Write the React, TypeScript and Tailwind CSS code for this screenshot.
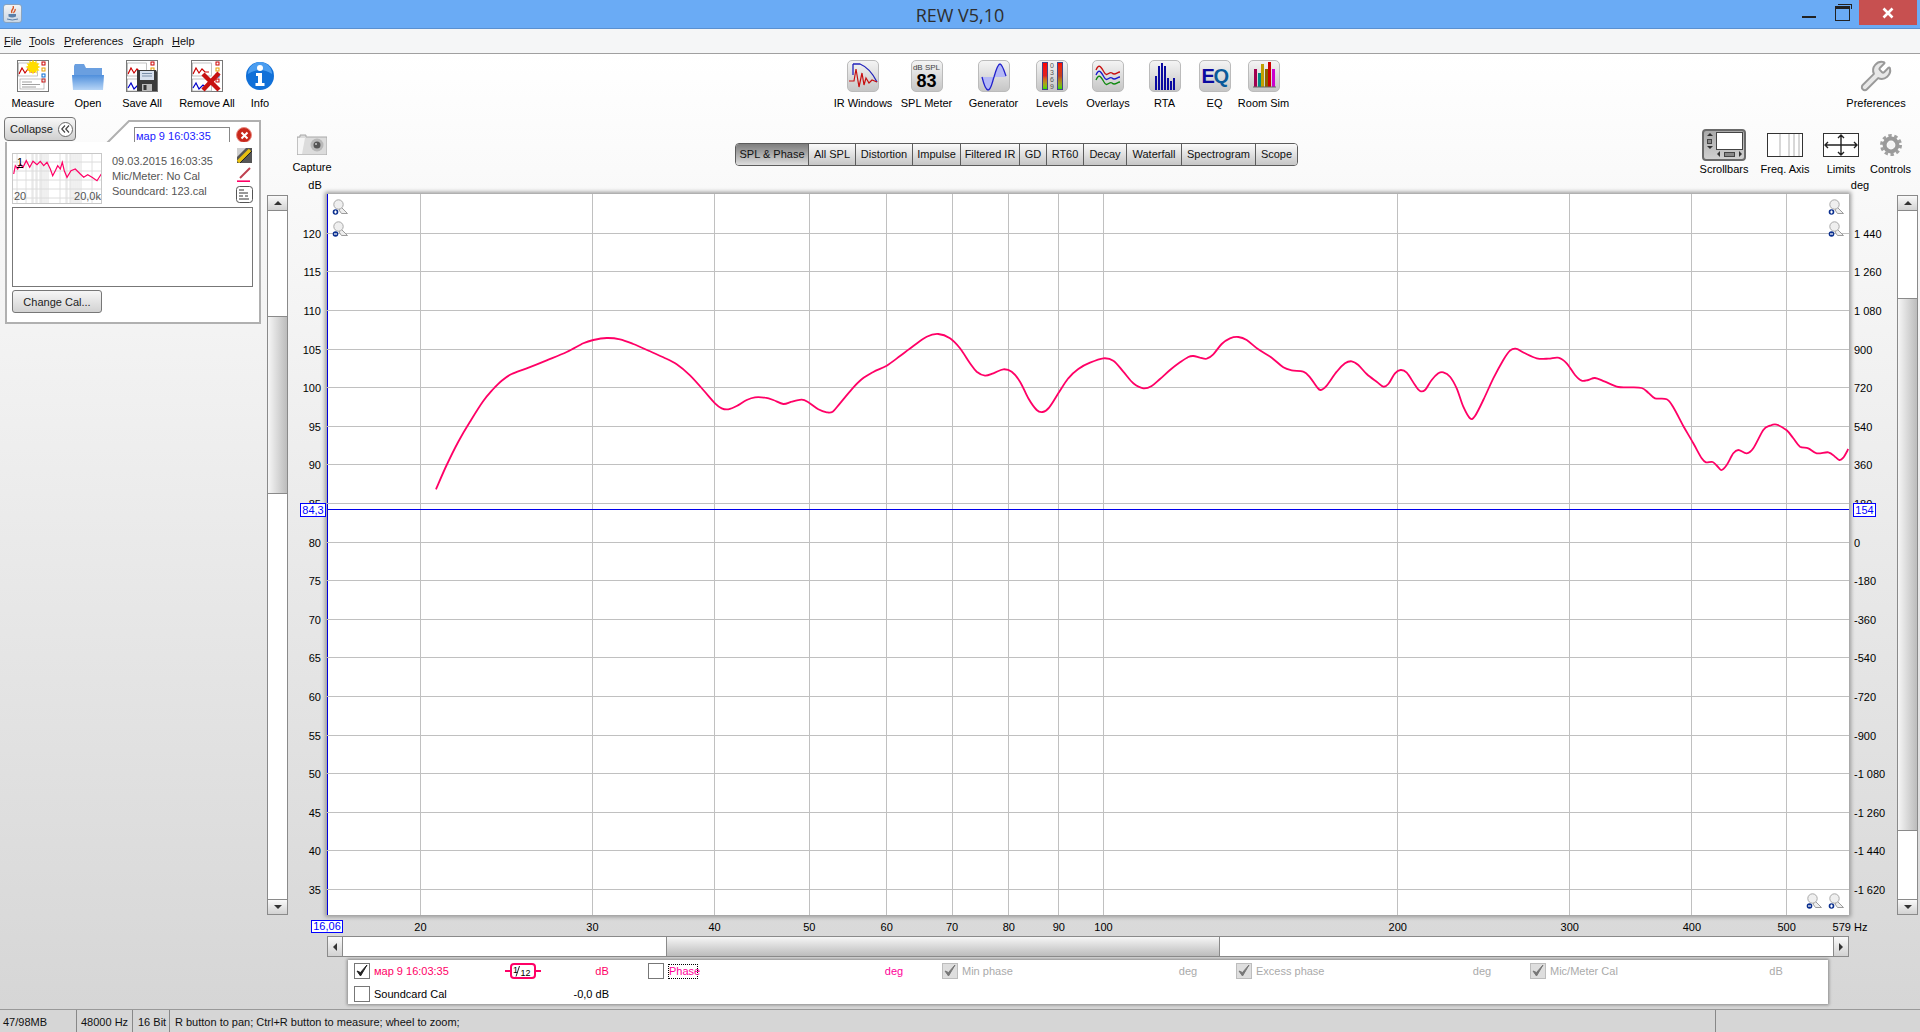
import React from "react";
import { Wrench } from "lucide-react";

const PLOT_X = 327, PLOT_Y = 194, PLOT_W = 1522, PLOT_H = 721;
const fx = (f: number) => 420.4 + 977.3 * Math.log10(f / 20) - PLOT_X;
const dby = (db: number) => 233.3 + (120 - db) * 7.72 - PLOT_Y;

const z9 = [[18,508],[50,435],[85,365],[120,305],[160,243],[190,207],[215,182],[245,162],[290,145],[350,121],[410,96],[460,70],[490,60],[530,54],[570,58],[610,72],[660,94],[700,112],[740,133],[780,166],[820,210],[855,250],[875,265],[895,268],[920,258],[950,240],[975,232],[1005,233],[1030,240],[1060,252],[1085,245],[1115,239],[1135,247],[1165,268],[1190,277],[1208,275],[1230,250],[1265,208],[1295,178],[1330,156],[1370,137],[1410,108],[1450,78],[1490,50]];
const z10 = [[25,42],[60,55],[90,85],[120,130],[140,155],[165,167],[190,160],[220,148],[245,155],[270,185],[295,235],[320,270],[338,276],[358,262],[385,220],[415,175],[445,147],[480,128],[520,115],[550,122],[580,155],[610,190],[640,205],[665,198],[690,177],[720,150],[750,127],[775,111],[790,108],[810,113],[830,116],[850,103],[875,72],[900,55],[925,51],[950,60],[985,88],[1025,113],[1060,142],[1085,151],[1120,155],[1140,172],[1160,200],[1172,210],[1190,197],[1220,155],[1245,130],[1265,124],[1285,135],[1310,162],[1340,185],[1360,200],[1375,192],[1395,160],[1412,150],[1430,158],[1455,195]];
const z11 = [[0,183],[15,180],[35,150],[55,130],[70,127],[90,140],[110,175],[130,230],[150,265],[165,258],[190,210],[220,145],[250,90],[270,62],[288,56],[315,70],[350,85],[385,86],[415,83],[440,100],[465,135],[485,152],[505,150],[525,144],[555,155],[595,171],[630,172],[665,174],[685,188],[705,205],[740,208],[760,232],[790,288],[820,340],[845,385],[858,397],[878,396],[895,412],[905,420],[920,405],[940,370],[955,360],[980,370],[1000,355],[1030,300],[1050,287],[1070,284],[1100,301],[1120,325],[1140,350],[1165,355],[1190,370],[1225,367],[1245,380],[1258,390],[1270,383],[1285,357]];
const pts: number[][] = [
  ...z9.map(([x, y]) => [430 + x / 3, 320 + y / 3]),
  ...z10.map(([x, y]) => [930 + x / 3, 320 + y / 3]),
  ...z11.map(([x, y]) => [1420 + x / 3, 330 + y / 3]),
].map(([x, y]) => [x - PLOT_X, y - PLOT_Y]);

function smooth(p: number[][]) {
  let d = `M${p[0][0].toFixed(1)} ${p[0][1].toFixed(1)}`;
  for (let i = 0; i < p.length - 1; i++) {
    const a = p[Math.max(i - 1, 0)], b = p[i], c = p[i + 1], e = p[Math.min(i + 2, p.length - 1)];
    d += `C${(b[0] + (c[0] - a[0]) / 6).toFixed(1)} ${(b[1] + (c[1] - a[1]) / 6).toFixed(1)} ${(c[0] - (e[0] - b[0]) / 6).toFixed(1)} ${(c[1] - (e[1] - b[1]) / 6).toFixed(1)} ${c[0].toFixed(1)} ${c[1].toFixed(1)}`;
  }
  return d;
}

const freqs = [20, 30, 40, 50, 60, 70, 80, 90, 100, 200, 300, 400, 500];
const dbs = Array.from({ length: 18 }, (_, i) => 120 - i * 5);
const degs = ["1 440", "1 260", "1 080", "900", "720", "540", "360", "180", "0", "-180", "-360", "-540", "-720", "-900", "-1 080", "-1 260", "-1 440", "-1 620"];
const tabs: [string, number][] = [["SPL & Phase", 72], ["All SPL", 47], ["Distortion", 57], ["Impulse", 48], ["Filtered IR", 59], ["GD", 27], ["RT60", 37], ["Decay", 43], ["Waterfall", 55], ["Spectrogram", 74], ["Scope", 42]];
const menus: [string, number][] = [["File", 25], ["Tools", 35], ["Preferences", 69], ["Graph", 39], ["Help", 30]];

function Report({ double }: { double?: boolean }) {
  return (
    <g>
      <rect x="0.5" y="0.5" width="31" height="31" fill="#fff" stroke="#777" />
      <path d="M2 14 L5 8 L8 13 L11 9 L14 12 L18 12" stroke="#c00" strokeWidth="1.2" fill="none" />
      <rect x="1.5" y="3" width="19" height="13" fill="none" stroke="#999" strokeWidth=".6" />
      {[[25, 2, "#c00"], [25, 8, "#e8a000"], [25, 14, "#0a6ad0"], [25, 19, "#c00"]].map(([x, y, c], i) => (
        <rect key={i} x={x as number} y={y as number} width="3" height="3" fill="#fff" stroke={c as string} />
      ))}
      {double ? (
        <>
          <rect x="1.5" y="19" width="19" height="12" fill="#fff" stroke="#999" strokeWidth=".6" />
          <path d="M2 28 L5 23 L8 29 L12 25 L16 28" stroke="#00c" strokeWidth="1.2" fill="none" />
        </>
      ) : (
        <>
          <rect x="3" y="19" width="24" height="10" fill="none" stroke="#999" strokeWidth=".6" />
          <path d="M5 22h10M5 24.5h18M5 27h14" stroke="#777" strokeWidth=".7" />
        </>
      )}
    </g>
  );
}

const S32 = ({ children, w = 32, h = 32 }: { children: React.ReactNode; w?: number; h?: number }) => (
  <svg width={w} height={h} viewBox={`0 0 ${w} ${h}`}>{children}</svg>
);

const MeasureIcon = () => (
  <S32>
    <Report />
    <g transform="translate(16 7)">
      {Array.from({ length: 12 }, (_, i) => (
        <path key={i} d="M0 -7.5 L2 -3 L-2 -3Z" fill="#ffdd00" transform={`rotate(${i * 30})`} />
      ))}
      <circle r="5" fill="#ffdd00" />
    </g>
  </S32>
);
const OpenIcon = () => (
  <S32>
    <defs>
      <linearGradient id="fo" x1="0" y1="0" x2="0" y2="1"><stop offset="0" stopColor="#4f8fdc" /><stop offset="1" stopColor="#b7d5f6" /></linearGradient>
    </defs>
    <path d="M2 6 L3 4 L12 4 L14 8 L30 8 L30 16 L2 16Z" fill="#6a9fe0" />
    <path d="M0 15 L32 15 L31 30 L1 30Z" fill="url(#fo)" />
  </S32>
);
const SaveIcon = () => (
  <S32>
    <Report double />
    <path d="M11 10 H30 L31 12 V31 H11Z" fill="#3a3a3a" />
    <rect x="14" y="11" width="14" height="9" fill="#d8e0ee" />
    <path d="M16 13.5h10M16 16h10" stroke="#7a8ea8" />
    <rect x="16" y="24" width="10" height="7" fill="#bbb" />
    <rect x="17.5" y="25" width="3" height="5" fill="#333" />
  </S32>
);
const RemoveIcon = () => (
  <S32>
    <Report double />
    <path d="M12 14 L28 30 M28 13 L12 30" stroke="#c81010" strokeWidth="4.4" />
  </S32>
);
const InfoIcon = () => (
  <S32 w={28} h={32}>
    <circle cx="14" cy="16" r="14" fill="#1170d8" />
    <path d="M2 14 A12 12 0 0 1 26 14 Q14 6 2 14Z" fill="#4a9df0" />
    <circle cx="14" cy="8" r="3" fill="#fff" />
    <path d="M10 13h6v10h2.5v3h-9v-3h2.5v-7h-2z" fill="#fff" />
  </S32>
);

function IconBox({ children }: { children: React.ReactNode }) {
  return (
    <div className="w-[32px] h-[32px] rounded-[5px] border border-[#bbbbbb] bg-gradient-to-b from-[#f4f4f4] to-[#c6c6c6] flex items-center justify-center overflow-hidden">
      {children}
    </div>
  );
}

const IrIcon = () => (
  <S32 w={30} h={30}>
    <path d="M5 3 V14 M5 3 H12 Q22 7 29 21" stroke="#2222bb" strokeWidth="1.3" fill="none" />
    <path d="M1 20 H6 L8 8 L11 26 L14 12 L16 24 L18 17 L21 22 L24 19 L29 21" stroke="#c81010" strokeWidth="1.2" fill="none" />
  </S32>
);
const GenIcon = () => (
  <S32 w={30} h={30}>
    <path d="M3 16 C5 24 7 29 9 29 C12 29 13 22 15 16 C17 9 19 3 21 3 C23 3 25 9 27 16Z" fill="#b4b8f6" />
    <path d="M3 16 C5 24 7 29 9 29 C12 29 13 22 15 16 C17 9 19 3 21 3 C23 3 25 9 27 15" stroke="#2222cc" strokeWidth="1.3" fill="none" />
  </S32>
);
const OverlayIcon = () => (
  <S32 w={30} h={30}>
    {[["#c81010", 0], ["#1818cc", 5], ["#108a10", 10]].map(([c, d]) => (
      <path key={c as string} d="M3 9 C6 2 8 6 11 11 C14 17 16 10 19 12 C22 15 24 11 27 11" stroke={c as string} strokeWidth="1.3" fill="none" transform={`translate(0 ${d})`} />
    ))}
  </S32>
);
const RtaIcon = () => (
  <S32 w={30} h={30}>
    {[[5, 14], [8, 24], [11, 27], [14, 24], [17, 12], [20, 9], [23, 12]].map(([x, h]) => (
      <rect key={x} x={x} y={29 - h} width="2" height={h} fill="#0a0aa0" />
    ))}
  </S32>
);
const RoomIcon = () => (
  <S32 w={30} h={30}>
    {[[5, 18, "#a00050"], [9, 14, "#008888"], [12, 23, "#c0a000"], [16, 18, "#8a6000"], [19, 25, "#cc0000"], [23, 18, "#cc00cc"]].map(([x, h, c], i) => (
      <rect key={i} x={x as number} y={26 - (h as number)} width="3" height={h as number} fill={c as string} />
    ))}
    <path d="M4 26H27" stroke="#666" />
  </S32>
);

function Tool({ w, icon, label, boxH = 32 }: { w: number; icon: React.ReactNode; label: string; boxH?: number }) {
  return (
    <div className="flex flex-col items-center shrink-0" style={{ width: w }}>
      <div className="flex items-center justify-center" style={{ height: boxH }}>{icon}</div>
      <div className="h-[13px] mt-[5px] leading-[13px] whitespace-nowrap text-black">{label}</div>
    </div>
  );
}

function Magnifier({ plus }: { plus?: boolean }) {
  return (
    <svg width="16" height="16" viewBox="0 0 16 16" className="block">
      <path d="M9 8 L15.5 14.5 H9.5 L7 11Z" fill="#eeeeee" stroke="#9c9c9c" strokeWidth="1" />
      <circle cx="6.5" cy="5.5" r="4.7" fill="#efefef" stroke="#a8a8a8" />
      <circle cx="3.5" cy="13" r="2.8" fill="#0a2f8f" />
      <path d={plus ? "M2 13h3M3.5 11.5v3" : "M2 13h3"} stroke="#fff" strokeWidth="1.2" />
    </svg>
  );
}

function Tick({ dim }: { dim?: boolean }) {
  return (
    <svg width="14" height="14" viewBox="0 0 14 14">
      <path d="M2 7 L5.5 12 L12 1 L5.5 8.5Z" fill={dim ? "#777" : "#222"} stroke={dim ? "#777" : "#222"} strokeWidth="1" strokeLinejoin="round" />
    </svg>
  );
}

function Check({ checked, dim }: { checked?: boolean; dim?: boolean }) {
  return (
    <div className={`w-[16px] h-[16px] shrink-0 border flex items-center justify-center ${dim ? "bg-[#dedede] border-[#bdbdbd]" : "bg-white border-[#777777]"}`}>
      {checked && <Tick dim={dim} />}
    </div>
  );
}

function DimSeries({ label, unit }: { label: string; unit: string }) {
  return (
    <div className="flex items-center ml-[33px] shrink-0 text-[#aaaaaa]">
      <Check checked dim />
      <div className="ml-[4px] w-[211px]">{label}</div>
      <div className="w-[30px] text-center">{unit}</div>
    </div>
  );
}

function VScroll({ thumbTop, thumbH }: { thumbTop: number; thumbH: number }) {
  return (
    <div className="w-[21px] h-[720px] mt-px shrink-0 border border-[#8a8a8a] bg-white flex flex-col">
      <div className="h-[15px] shrink-0 bg-gradient-to-b from-[#fafafa] to-[#d2d2d2] border-b border-[#8a8a8a] flex items-center justify-center">
        <div className="w-0 h-0 border-x-[4px] border-x-transparent border-b-[4px] border-b-[#333333]" />
      </div>
      <div className="flex-1">
        <div className="w-full bg-gradient-to-r from-[#f6f6f6] to-[#bcbcbc] border-y border-[#8a8a8a]" style={{ marginTop: thumbTop, height: thumbH }} />
      </div>
      <div className="h-[15px] shrink-0 bg-gradient-to-b from-[#fafafa] to-[#d2d2d2] border-t border-[#8a8a8a] flex items-center justify-center">
        <div className="w-0 h-0 border-x-[4px] border-x-transparent border-t-[4px] border-t-[#333333]" />
      </div>
    </div>
  );
}

const thumbCurve = [[40,520],[45,495],[52,505],[60,490],[68,500],[78,480],[88,500],[98,482],[110,492],[120,482],[130,495],[140,485],[150,505],[157,525],[165,510],[172,495],[180,505],[186,485],[192,510],[200,530],[212,510],[225,505],[240,520],[250,530],[262,522],[275,530],[290,540],[303,520]]
  .map(([x, y]) => `${((x - 38) / 3).toFixed(1)},${((y - 460) / 3).toFixed(1)}`).join(" ");

function Thumb() {
  return (
    <div className="relative w-[90px] h-[51px] mt-[5px] border border-[#c8c8c8] bg-white shrink-0 overflow-hidden">
      <svg width="90" height="51" className="block">
        {[4, 13, 19, 20, 23, 24, 27, 28, 29, 31, 33, 35, 47, 53, 54, 57, 58, 60, 62, 64, 66, 68, 79].map((x) => (
          <path key={x} d={`M${x} 0V51`} stroke="#e0e0e0" strokeWidth="1" />
        ))}
        {[8, 17, 26, 35, 44].map((y) => (
          <path key={y} d={`M0 ${y}H90`} stroke="#dcdcdc" strokeWidth="1" />
        ))}
        <polyline points={thumbCurve} fill="none" stroke="#ff0066" strokeWidth="1.2" />
      </svg>
      <div className="absolute left-[4px] top-[2px] leading-[13px] underline text-black">1</div>
      <div className="absolute left-[1px] bottom-0 leading-[13px] text-[#555555]">20</div>
      <div className="absolute right-0 bottom-0 leading-[13px] text-[#555555]">20,0k</div>
    </div>
  );
}

export default function App() {
  return (
    <div className="w-[1920px] h-[1032px] overflow-hidden flex flex-col font-['Liberation_Sans',Arial,sans-serif] text-[11px] text-black select-none">
      {/* Title bar */}
      <div className="h-[29px] shrink-0 bg-[#6aabf5] border-b border-[#5a90d0] flex items-start relative">
        <div className="ml-[3px] mt-[4px] w-[19px] h-[19px] rounded-[3px] bg-gradient-to-b from-[#f4f4f4] to-[#c9d6e4] border border-[#8aa4c0] flex items-center justify-center">
          <svg width="13" height="15" viewBox="0 0 13 15">
            <path d="M7 0 C9 3 4 4 6 7 M9 3 C10 5 7 6 8 7" stroke="#d8501c" strokeWidth="1.3" fill="none" />
            <path d="M2.5 8 H10 V10.5 Q6 12.5 2.5 10.5Z" fill="#5a7fa8" />
            <path d="M1 13 Q6 15 12 13" stroke="#5a7fa8" fill="none" strokeWidth="1" />
          </svg>
        </div>
        <div className="absolute left-1/2 -translate-x-1/2 top-[4px] text-[18px] leading-[22px] text-[#2e2e2e] font-['Open_Sans',sans-serif] whitespace-nowrap">REW V5,10</div>
        <div className="ml-auto flex items-start">
          <div className="w-[14px] h-[2px] bg-[#222222] mt-[16px]" />
          <div className="relative w-[15px] h-[15px] ml-[19px] mt-[6px] border-[1.5px] border-t-[3px] border-[#222222]">
            <div className="absolute -top-[5px] left-[2px] w-[14px] h-[5px] border-t-[1.5px] border-r-[1.5px] border-[#222222]" />
          </div>
          <div className="w-[58px] h-[25px] ml-[9px] mr-[3px] bg-[#c75050] flex items-center justify-center">
            <svg width="12" height="12" viewBox="0 0 12 12"><path d="M1.5 1.5 L10.5 10.5 M10.5 1.5 L1.5 10.5" stroke="#fff" strokeWidth="2.6" /></svg>
          </div>
        </div>
      </div>

      {/* Menu bar */}
      <div className="h-[25px] shrink-0 bg-[#f5f6f7] border-b border-[#a0a0a0] flex items-center pl-[4px] text-[#111111]">
        {menus.map(([m, w]) => (
          <span key={m} className="whitespace-nowrap" style={{ width: w }}><span className="underline">{m[0]}</span>{m.slice(1)}</span>
        ))}
      </div>

      {/* Body */}
      <div className="h-[955px] shrink-0 bg-gradient-to-b from-[#ffffff] to-[#d6d6d6] flex flex-col">
        {/* Main toolbar */}
        <div className="h-[63px] shrink-0 flex pt-[6px] pl-[6px]">
          <Tool w={54} icon={<MeasureIcon />} label="Measure" />
          <Tool w={56} icon={<OpenIcon />} label="Open" />
          <Tool w={52} icon={<SaveIcon />} label="Save All" />
          <Tool w={78} icon={<RemoveIcon />} label="Remove All" />
          <Tool w={28} icon={<InfoIcon />} label="Info" />
          <div className="w-[566px] shrink-0" />
          <Tool w={46} icon={<IconBox><IrIcon /></IconBox>} label="IR Windows" />
          <Tool w={81} label="SPL Meter" icon={
            <IconBox>
              <div className="flex flex-col items-center leading-none">
                <span className="text-[8px] text-[#444444] leading-[9px]">dB SPL</span>
                <span className="text-[18px] font-bold leading-[18px] text-black">83</span>
              </div>
            </IconBox>} />
          <Tool w={53} icon={<IconBox><GenIcon /></IconBox>} label="Generator" />
          <Tool w={64} label="Levels" icon={
            <IconBox>
              <div className="flex gap-[1px] h-[28px]">
                <div className="w-[6px] border border-[#444488] bg-gradient-to-b from-[#ff0000] via-[#e02020] to-[#00dd00]" />
                <div className="w-[7px] flex flex-col items-center justify-between text-[7px] leading-[7px] text-[#555555]"><span>0</span><span>3</span><span>6</span><span>9</span></div>
                <div className="w-[6px] border border-[#444488] bg-gradient-to-b from-[#ff0000] via-[#c04020] to-[#00dd00]" />
              </div>
            </IconBox>} />
          <Tool w={48} icon={<IconBox><OverlayIcon /></IconBox>} label="Overlays" />
          <Tool w={65} icon={<IconBox><RtaIcon /></IconBox>} label="RTA" />
          <Tool w={35} label="EQ" icon={
            <IconBox>
              <span className="text-[20px] font-bold leading-none tracking-[-1.5px] text-[#0a0aa0]">E<span className="text-[#0a5a9a]">Q</span></span>
            </IconBox>} />
          <Tool w={63} icon={<IconBox><RoomIcon /></IconBox>} label="Room Sim" />
          <div className="w-[551px] shrink-0" />
          <Tool w={60} label="Preferences" icon={<Wrench size={34} strokeWidth={1.4} color="#9a9a9a" fill="#e8e8e8" />} />
        </div>

        {/* Working area */}
        <div className="flex-1 flex min-h-0">
          {/* Left panel */}
          <div className="w-[267px] shrink-0 pl-[5px]">
            <div className="relative h-[25px]">
              <svg width="256" height="27" className="absolute left-0 top-0">
                <path d="M1 26 H102 L124 4 H255 V27 H1Z" fill="#ffffff" stroke="#b0b0b0" strokeWidth="2" />
              </svg>
              <div className="relative flex items-start">
                <div className="-ml-px w-[72px] h-[24px] rounded-[4px] border border-[#777777] bg-gradient-to-b from-[#f8f8f8] to-[#d0d0d0] flex items-center pl-[5px] gap-[5px]">
                  <span className="text-[#222222]">Collapse</span>
                  <div className="w-[15px] h-[15px] rounded-full border border-[#666666] bg-white flex items-center justify-center">
                    <svg width="9" height="8" viewBox="0 0 9 8"><path d="M4 0.5 L0.8 4 L4 7.5 M8 0.5 L4.8 4 L8 7.5" stroke="#444" strokeWidth="1.2" fill="none" /></svg>
                  </div>
                </div>
                <div className="ml-[58px] mt-[10px] w-[96px] h-[17px] border border-[#888888] bg-white text-[#1a1aff] leading-[16px] pl-px whitespace-nowrap">мар 9 16:03:35</div>
                <div className="ml-[6px] mt-[10px] w-[16px] h-[16px] rounded-full bg-[#c8281c] border border-[#e88a80] flex items-center justify-center">
                  <svg width="9" height="9" viewBox="0 0 9 9"><path d="M1.5 1.5 L7.5 7.5 M7.5 1.5 L1.5 7.5" stroke="#fff" strokeWidth="2" /></svg>
                </div>
              </div>
            </div>
            <div className="relative w-[256px] h-[182px] bg-white border-2 border-t-0 border-[#b0b0b0] pl-[5px] pt-[6px]">
              <div className="flex h-[56px]">
                <Thumb />
                <div className="ml-[10px] w-[124px] pt-[7px] flex flex-col gap-[2px] text-[#555555] leading-[13px] whitespace-nowrap">
                  <div>09.03.2015 16:03:35</div>
                  <div>Mic/Meter: No Cal</div>
                  <div>Soundcard: 123.cal</div>
                </div>
                <div className="flex flex-col items-center w-[17px] gap-[4px]">
                  <svg width="15" height="15" viewBox="0 0 15 15">
                    <rect width="15" height="15" fill="#555" />
                    <path d="M0 0H9L0 9Z" fill="#cfcfcf" />
                    <path d="M1 14 L13 2" stroke="#e8c010" strokeWidth="3.4" />
                    <path d="M3 15 L15 3" stroke="#222" strokeWidth="1" />
                  </svg>
                  <svg width="15" height="15" viewBox="0 0 15 15">
                    <path d="M3 11 L13 1" stroke="#c04050" strokeWidth="2" />
                    <path d="M0 14.2 H13" stroke="#ff0066" strokeWidth="1.6" />
                  </svg>
                  <svg width="17" height="17" viewBox="0 0 17 17">
                    <rect x=".5" y=".5" width="16" height="16" rx="3" fill="#fff" stroke="#555" />
                    <path d="M3 4h5M3 7h9M3 10h4M9 10h3M3 13h10" stroke="#333" />
                  </svg>
                </div>
              </div>
              <div className="w-[241px] h-[80px] mt-[3px] border border-[#777777] bg-white" />
              <div className="w-[90px] h-[23px] mt-[3px] pt-px rounded-[3px] border border-[#777777] bg-gradient-to-b from-[#f6f6f6] to-[#d2d2d2] flex items-center justify-center text-[#222222]">Change Cal...</div>
            </div>
          </div>

          {/* Graph column */}
          <div className="flex-1 min-w-0 flex flex-col">
            {/* Upper controls */}
            <div className="h-[77px] shrink-0 flex">
              <div className="ml-[23px] w-[44px] shrink-0 flex flex-col items-center pt-[17px]">
                <svg width="30" height="21" viewBox="0 0 30 21">
                  <path d="M0 3 H3 V1 H9 V3 H30 V21 H0Z" fill="#dcdcdc" stroke="#a8a8a8" />
                  <path d="M1 4 H8 L5 20 H1Z" fill="#f6f6f6" />
                  <circle cx="20" cy="11" r="6.5" fill="#b8b8b8" />
                  <circle cx="20" cy="11" r="3.5" fill="#555" />
                  <circle cx="19" cy="10" r="1" fill="#ccc" />
                </svg>
                <div className="mt-[6px] h-[13px] leading-[13px]">Capture</div>
                <div className="mt-[5px] h-[13px] leading-[13px] pl-[6px]">dB</div>
              </div>
              <div className="ml-[401px] mt-[26px] h-[23px] flex border border-[#5c5c5c] rounded-[4px] overflow-hidden shrink-0">
                {tabs.map(([t, w], i) => (
                  <div
                    key={t}
                    style={{ width: w }}
                    className={`flex items-center justify-center whitespace-nowrap text-[#111111] ${i > 0 ? "border-l border-[#5c5c5c]" : ""} ${i === 0 ? "bg-gradient-to-b from-[#7e7e7e] to-[#dedede]" : "bg-gradient-to-b from-[#fbfbfb] to-[#c6c6c6]"}`}
                  >
                    {t}
                  </div>
                ))}
              </div>
              <div className="ml-[396px] pt-[12px] flex flex-col shrink-0">
                <div className="flex">
                  <div className="w-[60px] flex flex-col items-center">
                    <div className="w-[44px] h-[32px] rounded-[4px] border-2 border-[#6a6a6a] bg-gradient-to-b from-[#aaaaaa] to-[#d0d0d0] flex flex-col p-[1px]">
                      <div className="flex-1 flex gap-[2px]">
                        <div className="w-[9px] flex flex-col items-center justify-between py-[1px]">
                          <div className="w-0 h-0 border-x-[3px] border-x-transparent border-b-[3px] border-b-[#333333]" />
                          <div className="w-[5px] h-[5px] bg-[#888888] border border-[#444444]" />
                          <div className="w-0 h-0 border-x-[3px] border-x-transparent border-t-[3px] border-t-[#333333]" />
                        </div>
                        <div className="flex-1 bg-white border border-[#444444]" />
                      </div>
                      <div className="h-[8px] ml-[11px] flex items-center justify-between px-[1px]">
                        <div className="w-0 h-0 border-y-[3px] border-y-transparent border-r-[3px] border-r-[#333333]" />
                        <div className="w-[11px] h-[5px] bg-[#888888] border border-[#444444]" />
                        <div className="w-0 h-0 border-y-[3px] border-y-transparent border-l-[3px] border-l-[#333333]" />
                      </div>
                    </div>
                    <div className="mt-[2px] h-[13px] leading-[13px] whitespace-nowrap">Scrollbars</div>
                  </div>
                  <div className="w-[62px] flex flex-col items-center">
                    <div className="h-[32px] flex items-center">
                      <svg width="36" height="24" viewBox="0 0 36 24">
                        <rect x=".5" y=".5" width="35" height="23" fill="#fff" stroke="#333" />
                        <path d="M13 1V23M22 1V23M27 1V23M32 1V23" stroke="#b0b0b0" />
                      </svg>
                    </div>
                    <div className="mt-[2px] h-[13px] leading-[13px] whitespace-nowrap">Freq. Axis</div>
                  </div>
                  <div className="w-[50px] flex flex-col items-center">
                    <div className="h-[32px] flex items-center">
                      <svg width="36" height="24" viewBox="0 0 36 24">
                        <rect x=".5" y=".5" width="35" height="23" fill="#fff" stroke="#333" />
                        <path d="M2 12H34M18 2V22M5 9L2 12L5 15M31 9L34 12L31 15M15 5L18 2L21 5M15 19L18 22L21 19" stroke="#222" strokeWidth="1.4" fill="none" />
                      </svg>
                    </div>
                    <div className="mt-[2px] h-[13px] leading-[13px] whitespace-nowrap">Limits</div>
                  </div>
                  <div className="w-[49px] flex flex-col items-center">
                    <div className="h-[32px] flex items-center">
                      <svg width="22" height="22" viewBox="0 0 22 22">
                        <circle cx="11" cy="11" r="9.5" fill="none" stroke="#a0a0a0" strokeWidth="3" strokeDasharray="3.4 2.57" />
                        <circle cx="11" cy="11" r="6.4" fill="none" stroke="#9a9a9a" strokeWidth="4" />
                        <circle cx="11" cy="11" r="3.6" fill="#f4f4f4" />
                      </svg>
                    </div>
                    <div className="mt-[2px] h-[13px] leading-[13px] whitespace-nowrap">Controls</div>
                  </div>
                </div>
                <div className="ml-[146px] mt-[3px] w-[40px] text-center h-[13px] leading-[13px]">deg</div>
              </div>
            </div>

            {/* Plot row */}
            <div className="h-[721px] shrink-0 flex">
              <VScroll thumbTop={105} thumbH={178} />
              <div className="relative w-[39px] shrink-0">
                {dbs.map((d) => (
                  <div key={d} className="absolute right-[6px] leading-[13px]" style={{ top: dby(d) - 5.5 }}>{d}</div>
                ))}
                <div className="absolute left-[12px] w-[26px] h-[14px] bg-white border border-[#0000ff] text-[#0000ff] leading-[12px] text-center z-10" style={{ top: 309 }}>84,3</div>
              </div>
              <div className="relative shrink-0 bg-white shadow-[0_0_4px_2px_#999999] border-l border-[#0000dd]" style={{ width: PLOT_W, height: PLOT_H }}>
                <svg width={PLOT_W} height={PLOT_H} className="absolute -left-px top-0">
                  {freqs.map((f) => (
                    <path key={f} d={`M${Math.floor(fx(f)) + 0.5} 0V${PLOT_H}`} stroke="#c0c0c0" />
                  ))}
                  {dbs.map((d) => (
                    <path key={d} d={`M0 ${Math.floor(dby(d)) + 0.5}H${PLOT_W}`} stroke="#c0c0c0" />
                  ))}
                  <path d={smooth(pts)} fill="none" stroke="#ff0066" strokeWidth="1.8" strokeLinejoin="round" />
                  <path d={`M0 315.5H${PLOT_W}`} stroke="#0000ee" strokeWidth="1.2" />
                </svg>
                <div className="absolute left-[4px] top-[5px] flex flex-col gap-[6px]"><Magnifier plus /><Magnifier /></div>
                <div className="absolute right-[5px] top-[5px] flex flex-col gap-[6px]"><Magnifier plus /><Magnifier /></div>
                <div className="absolute right-[5px] bottom-[6px] flex gap-[6px]"><Magnifier /><Magnifier plus /></div>
              </div>
              <div className="relative w-[48px] shrink-0">
                {degs.map((d, i) => (
                  <div key={d} className="absolute left-[5px] leading-[13px] whitespace-nowrap" style={{ top: dby(120 - i * 5) - 5.5 }}>{d}</div>
                ))}
                <div className="absolute left-[4px] w-[23px] h-[14px] bg-white border border-[#0000ff] text-[#0000ff] leading-[12px] text-center z-10" style={{ top: 309 }}>154</div>
              </div>
              <VScroll thumbTop={87} thumbH={533} />
            </div>

            {/* Frequency labels */}
            <div className="relative h-[21px] shrink-0">
              {freqs.map((f) => (
                <div key={f} className="absolute -translate-x-1/2 top-[6px] leading-[13px]" style={{ left: 60 + fx(f) }}>{f}</div>
              ))}
              <div className="absolute top-[6px] leading-[13px] -translate-x-1/2 whitespace-nowrap" style={{ left: 1583 }}>579 Hz</div>
              <div className="absolute left-[44px] top-[5px] w-[32px] h-[13px] bg-white border border-[#0000ff] text-[#0000ff] leading-[11px] text-center">16,06</div>
            </div>

            {/* Horizontal scrollbar */}
            <div className="ml-[60px] w-[1522px] h-[21px] shrink-0 border border-[#8a8a8a] bg-white flex">
              <div className="w-[15px] shrink-0 bg-gradient-to-b from-[#fafafa] to-[#d2d2d2] border-r border-[#8a8a8a] flex items-center justify-center">
                <div className="w-0 h-0 border-y-[4px] border-y-transparent border-r-[4px] border-r-[#333333]" />
              </div>
              <div className="flex-1 flex">
                <div className="ml-[323px] w-[554px] bg-gradient-to-b from-[#f6f6f6] to-[#bcbcbc] border-x border-[#8a8a8a]" />
              </div>
              <div className="w-[15px] shrink-0 bg-gradient-to-b from-[#fafafa] to-[#d2d2d2] border-l border-[#8a8a8a] flex items-center justify-center">
                <div className="w-0 h-0 border-y-[4px] border-y-transparent border-l-[4px] border-l-[#333333]" />
              </div>
            </div>

            {/* Legend */}
            <div className="ml-[81px] mt-[3px] w-[1480px] h-[44px] shrink-0 bg-white shadow-[0_0_3px_1px_#888888] pl-[6px] pt-[3px] flex flex-col gap-[7px]">
              <div className="flex items-center h-[16px]">
                <Check checked />
                <div className="ml-[4px] w-[131px] text-[#ff0066] whitespace-nowrap">мар 9 16:03:35</div>
                <svg width="36" height="16" viewBox="0 0 36 16" className="shrink-0">
                  <path d="M0 8H6M30 8H36" stroke="#ff0066" strokeWidth="2" />
                  <rect x="6" y="1" width="24" height="14" rx="3" fill="#fff" stroke="#ff0066" strokeWidth="2" />
                  <text x="8" y="9.5" fontSize="9" fill="#000" fontFamily="Liberation Sans">1</text>
                  <path d="M14.5 3 L11 13.5" stroke="#222" />
                  <text x="15.5" y="13" fontSize="9" fill="#000" fontFamily="Liberation Sans">12</text>
                </svg>
                <div className="ml-[49px] w-[24px] text-center text-[#ff0066]">dB</div>
                <div className="ml-[34px]"><Check /></div>
                <div className="ml-[4px] w-[211px]"><span className="inline-block w-[30px] border border-dotted border-black text-[#ff0099] leading-[13px] whitespace-nowrap">Phase</span></div>
                <div className="w-[30px] text-center text-[#ff0099]">deg</div>
                <DimSeries label="Min phase" unit="deg" />
                <DimSeries label="Excess phase" unit="deg" />
                <DimSeries label="Mic/Meter Cal" unit="dB" />
              </div>
              <div className="flex items-center h-[16px]">
                <Check />
                <div className="ml-[4px] w-[135px]">Soundcard Cal</div>
                <div className="w-[100px] text-right">-0,0 dB</div>
              </div>
            </div>
          </div>
        </div>
      </div>

      {/* Status bar */}
      <div className="h-[23px] shrink-0 bg-[#d6d6d6] border-t border-[#999999] flex text-[#111111] leading-[24px]">
        <div className="w-[77px] pl-[3px] border-r border-[#888888]">47/98MB</div>
        <div className="w-[56px] pl-[4px] border-r border-[#888888]">48000 Hz</div>
        <div className="w-[37px] pl-[5px] border-r border-[#888888]">16 Bit</div>
        <div className="w-[1546px] pl-[5px] border-r border-[#888888]">R button to pan; Ctrl+R button to measure; wheel to zoom;</div>
      </div>
    </div>
  );
}
